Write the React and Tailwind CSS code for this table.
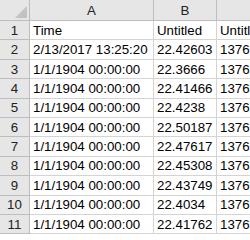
import React from 'react'

const rows = [
  ['Time', 'Untitled', 'Untitled'],
  ['2/13/2017 13:25:20', '22.42603', '1376.5'],
  ['1/1/1904 00:00:00', '22.3666', '1376.5'],
  ['1/1/1904 00:00:00', '22.41466', '1376.5'],
  ['1/1/1904 00:00:00', '22.4238', '1376.5'],
  ['1/1/1904 00:00:00', '22.50187', '1376.5'],
  ['1/1/1904 00:00:00', '22.47617', '1376.5'],
  ['1/1/1904 00:00:00', '22.45308', '1376.5'],
  ['1/1/1904 00:00:00', '22.43749', '1376.5'],
  ['1/1/1904 00:00:00', '22.4034', '1376.5'],
  ['1/1/1904 00:00:00', '22.41762', '1376.5'],
]

export default function App() {
  return (
    <div
      className="w-[250px] h-[240px] overflow-hidden bg-white text-[13.3px] text-black"
      style={{ fontFamily: '"Liberation Sans", Arial, sans-serif' }}
    >
      <div className="grid grid-cols-[30px_124px_63px_80px] grid-rows-[21px] auto-rows-[19.4px]">
        <div className="relative bg-[#e6e6e6] border-r border-b border-[#bdbdbd]">
          <div className="absolute right-[2px] bottom-[2px] w-0 h-0 border-l-[12px] border-l-transparent border-b-[12px] border-b-[#c2c2c2]" />
        </div>
        {['A', 'B', 'C'].map((c) => (
          <div
            key={c}
            className="bg-[#e6e6e6] border-r border-b border-[#bdbdbd] flex items-center justify-center pt-[1px] text-[#222]"
          >
            {c}
          </div>
        ))}
        {rows.map((r, i) => (
          <React.Fragment key={i}>
            <div className="bg-[#e6e6e6] border-r border-b border-[#bdbdbd] flex items-center justify-center pt-[1px] text-[#222]">
              {i + 1}
            </div>
            {r.map((v, j) => (
              <div
                key={j}
                className="border-r border-b border-[#d4d4d4] px-[3px] pt-[1px] flex items-center whitespace-nowrap overflow-hidden"
              >
                {v}
              </div>
            ))}
          </React.Fragment>
        ))}
      </div>
    </div>
  )
}
